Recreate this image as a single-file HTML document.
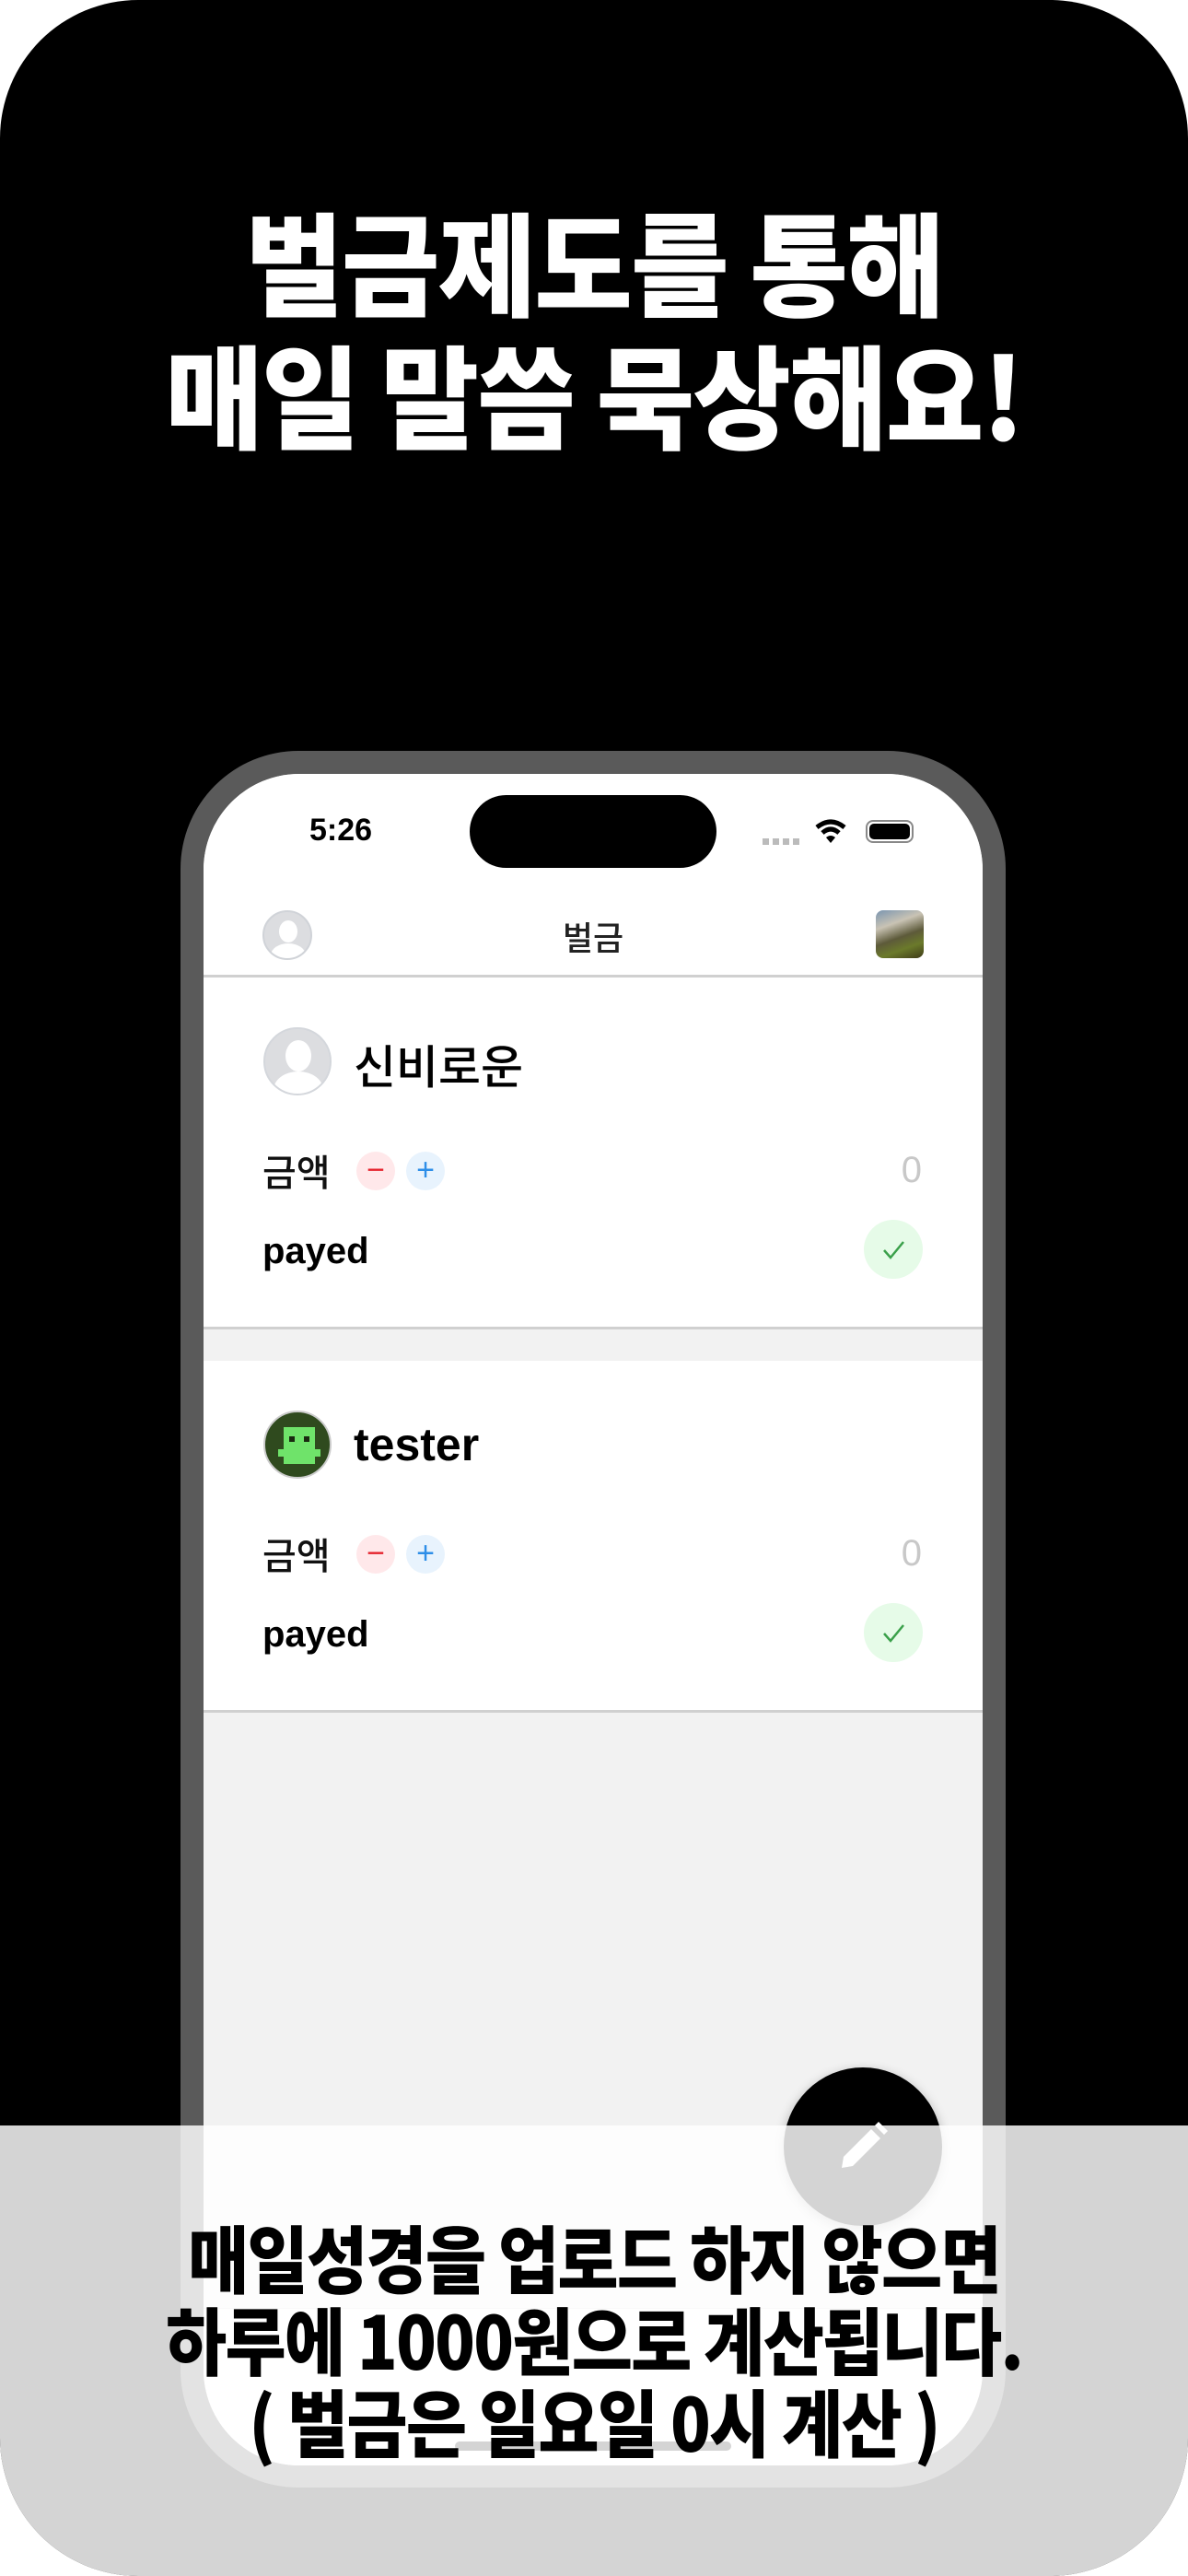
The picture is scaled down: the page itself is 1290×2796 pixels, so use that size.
<!DOCTYPE html>
<html><head><meta charset="utf-8"><style>
*{margin:0;padding:0;box-sizing:border-box}
html,body{width:1290px;height:2796px;background:#fff;overflow:hidden}
body{position:relative;font-family:"Liberation Sans","Noto Sans CJK KR",sans-serif}
.bg{position:absolute;left:0;top:0;width:1290px;height:2796px;background:#000;border-radius:150px}
.title{position:absolute;left:0;width:1290px;text-align:center;color:#fff;font-family:"Noto Sans CJK KR",sans-serif;font-weight:900;font-size:122px;line-height:144px;top:210px;letter-spacing:-2px;transform:scaleX(0.95)}
.frame{position:absolute;left:196px;top:815px;width:896px;height:1885px;background:#5a5a5a;border-radius:128px}
.screen{position:absolute;left:221px;top:840px;width:846px;height:1836px;background:#f2f2f2;border-radius:104px;overflow:hidden}
.top{position:absolute;left:0;top:0;width:846px;height:221px;background:#fff;border-bottom:3px solid #d0d0d0}
.time{position:absolute;left:115px;top:42px;font-size:34px;font-weight:bold;color:#000}
.island{position:absolute;left:289px;top:23px;width:268px;height:79px;background:#000;border-radius:40px}
.card{position:absolute;left:0;width:846px;height:382px;background:#fff;border-bottom:3px solid #d0d0d0}
.av{position:absolute;left:65px;top:54px;width:74px;height:74px;border-radius:50%;background:#dcdde0;border:2px solid #d4d7dc;overflow:hidden}
.name{position:absolute;left:163px;top:58px;font-size:50px;color:#000;font-family:"Noto Sans CJK KR",sans-serif;font-weight:500}
.amt{position:absolute;left:64px;top:180px;font-size:40px;font-family:"Noto Sans CJK KR",sans-serif;font-weight:500;color:#111}
.c{position:absolute;top:189px;width:42px;height:42px;border-radius:50%;text-align:center;line-height:40px;font-size:34px}
.zero{position:absolute;right:66px;top:187px;font-size:40px;color:#c8c8c8}
.payed{position:absolute;left:64px;top:275px;font-size:40px;font-weight:bold;color:#000}
.chk{position:absolute;left:717px;top:263px;width:64px;height:64px;border-radius:50%;background:#e6fbe8}
.ov{position:absolute;left:0;top:2307px;width:1290px;height:489px;background:rgba(255,255,255,0.83);border-radius:0 0 150px 150px}
.bt{position:absolute;left:0;width:1290px;text-align:center;top:2405px;font-family:"Noto Sans CJK KR",sans-serif;font-weight:900;font-size:80px;line-height:89px;color:#000;letter-spacing:-2px;transform:scaleX(0.9)}
</style></head><body>
<div class="bg"></div>
<div class="title">벌금제도를 통해<br>매일 말씀 묵상해요!</div>
<div class="frame"></div>
<div class="screen">
  <div class="top">
    <div class="time">5:26</div>
    <div class="island"></div>
    <div style="position:absolute;left:607px;top:70px;width:42px;height:7px;background:repeating-linear-gradient(90deg,#bbb 0 7px,transparent 7px 11px)"></div>
    <svg style="position:absolute;left:664px;top:49px" width="34" height="28" viewBox="0 0 34 28"><path d="M2 9 Q17 -3 32 9" stroke="#000" stroke-width="5" fill="none"/><path d="M8 15 Q17 7 26 15" stroke="#000" stroke-width="5" fill="none"/><path d="M12 20 L17 26 L22 20 Q17 16 12 20Z" fill="#000"/></svg>
    <div style="position:absolute;left:719px;top:50px;width:52px;height:25px;border:2px solid #888;border-radius:8px;padding:2px"><div style="width:100%;height:100%;background:#000;border-radius:5px"></div></div>
    <div style="position:absolute;left:64px;top:148px;width:54px;height:54px;border-radius:50%;background:#dcdde0;border:2px solid #d0d3d8;overflow:hidden"><div style="position:absolute;left:16px;top:9px;width:20px;height:24px;border-radius:50%;background:#fff"></div><div style="position:absolute;left:7px;top:34px;width:38px;height:26px;border-radius:50%;background:#fff"></div></div>
    <div style="position:absolute;left:0;width:846px;text-align:center;top:150px;font-size:36px;font-family:'Noto Sans CJK KR',sans-serif;font-weight:500;color:#222">벌금</div>
    <div style="position:absolute;left:730px;top:148px;width:52px;height:52px;border-radius:8px;background:linear-gradient(160deg,#7a95b0 0%,#c9c3b4 30%,#5d5a3a 55%,#6b7a2b 75%,#3e3a18 100%)"></div>
  </div>
  <div class="card" style="top:221px">
    <div class="av"><div style="position:absolute;left:22px;top:12px;width:28px;height:34px;border-radius:50%;background:#fff"></div><div style="position:absolute;left:9px;top:46px;width:54px;height:40px;border-radius:50%;background:#fff"></div></div>
    <div class="name">신비로운</div>
    <div class="amt">금액</div>
    <div class="c" style="left:166px;background:#ffe8ea;color:#e5222c">−</div>
    <div class="c" style="left:220px;background:#e8f3fd;color:#2d8ee8">+</div>
    <div class="zero">0</div>
    <div class="payed">payed</div>
    <div class="chk"><svg width="64" height="64"><path d="M22 33 L29 41 L43 24" stroke="#3aa04a" stroke-width="2.5" fill="none"/></svg></div>
  </div>
  <div class="card" style="top:637px">
    <div class="av" style="background:#2f4a1e;border-color:#ccc"><div style="position:absolute;left:20px;top:16px;width:34px;height:40px;background:#6fe36a"></div><div style="position:absolute;left:26px;top:26px;width:6px;height:6px;background:#1a2a10"></div><div style="position:absolute;left:42px;top:26px;width:6px;height:6px;background:#1a2a10"></div><div style="position:absolute;left:14px;top:40px;width:46px;height:8px;background:#6fe36a"></div></div>
    <div class="name" style="font-family:'Liberation Sans',sans-serif;font-weight:bold;top:62px">tester</div>
    <div class="amt">금액</div>
    <div class="c" style="left:166px;background:#ffe8ea;color:#e5222c">−</div>
    <div class="c" style="left:220px;background:#e8f3fd;color:#2d8ee8">+</div>
    <div class="zero">0</div>
    <div class="payed">payed</div>
    <div class="chk"><svg width="64" height="64"><path d="M22 33 L29 41 L43 24" stroke="#3aa04a" stroke-width="2.5" fill="none"/></svg></div>
  </div>
  <div style="position:absolute;left:0;top:1665px;width:846px;height:171px;background:#fff;border-top:1px solid #ddd"></div>
  <div style="position:absolute;left:273px;top:1810px;width:300px;height:10px;border-radius:5px;background:#000"></div>
</div>
<div style="position:absolute;left:851px;top:2244px;width:172px;height:172px;border-radius:50%;background:#000;box-shadow:0 4px 12px rgba(0,0,0,0.3)"><svg style="position:absolute;left:55px;top:55px" width="62" height="62" viewBox="0 0 62 62"><path d="M8 54 L10 42 L40 12 L50 22 L20 52 Z" fill="#fff"/><path d="M44 8 L48 4 L58 14 L54 18 Z" fill="#fff"/></svg></div>
<div class="ov"></div>
<div class="bt">매일성경을 업로드 하지 않으면<br>하루에 1000원으로 계산됩니다.<br>( 벌금은 일요일 0시 계산 )</div>
</body></html>
